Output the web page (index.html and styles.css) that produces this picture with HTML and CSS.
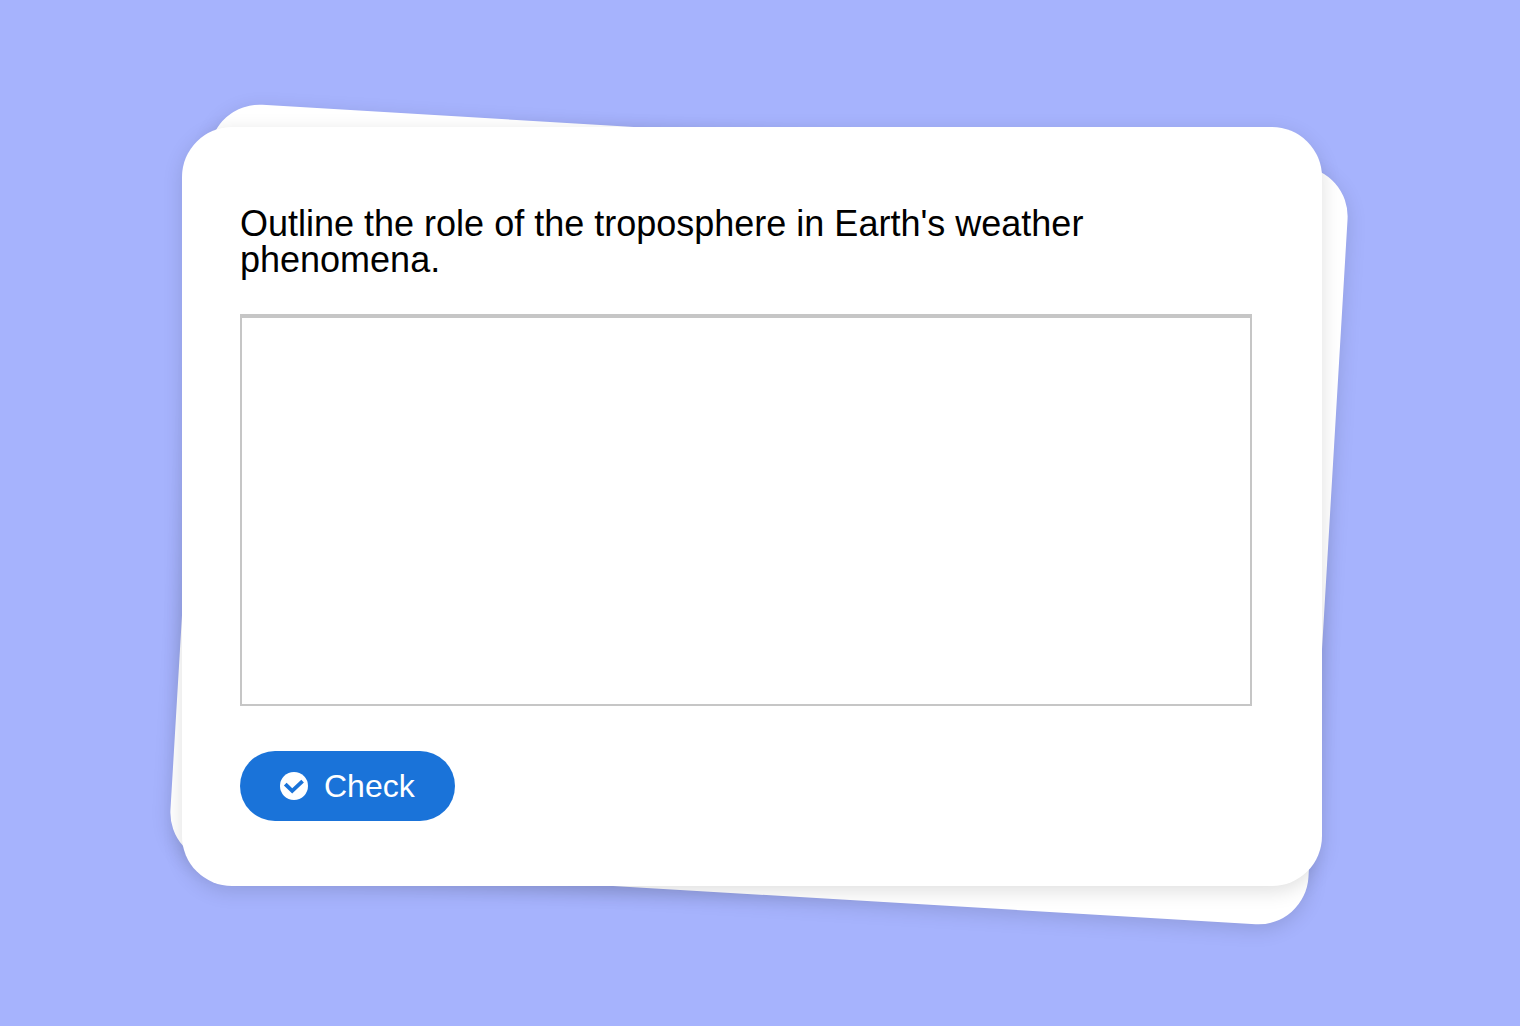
FILE: index.html
```html
<!DOCTYPE html>
<html lang="en">
<head>
  <meta charset="UTF-8">
  <meta name="viewport" content="width=device-width, initial-scale=1.0">
  <title>Essay question</title>
  <link rel="stylesheet" href="styles.css">
</head>
<body>
  <main class="card">
    <form class="question">
      <label class="question-text" for="answer">Outline the role of the troposphere in Earth's weather phenomena.</label>
      <textarea class="answer" id="answer" name="answer"></textarea>
      <button class="check" type="button">
        <svg class="check-icon" viewBox="0 0 28 28" aria-hidden="true">
          <circle cx="14" cy="14" r="14" fill="#fff"/>
          <path d="M6.6 13.4l5.6 5.4 9-8.4" fill="none" stroke="#1a73d9" stroke-width="3.8" stroke-linejoin="miter" stroke-linecap="square"/>
        </svg>
        Check
      </button>
    </form>
  </main>
</body>
</html>
```

FILE: styles.css
```css
* {
  box-sizing: border-box;
}
body {
  margin: 0;
  padding: 127px 198px 140px 182px;
  background-color: #a6b3fd;
  font-family: "Liberation Sans", Arial, sans-serif;
  color: #000;
  overflow-x: hidden;
}
.card {
  position: relative;
  z-index: 0;
}
/* tilted sheet behind, straight sheet on top */
.card::before,
.card::after {
  content: "";
  position: absolute;
  inset: 0;
  z-index: -1;
  border-radius: 50px;
  background-color: #fff;
  box-shadow: 0 5px 20px rgba(0, 0, 0, 0.13);
}
.card::before {
  transform: translate(7px, 8px) rotate(3.4deg);
}
.question {
  display: flex;
  flex-direction: column;
  align-items: flex-start;
  padding: 79px 70px 65px 58px;
}
.question-text {
  margin-bottom: 36px;
  font-size: 36px;
  line-height: 36px;
}
.answer {
  display: block;
  width: 100%;
  height: 392px;
  margin-bottom: 45px;
  padding: 16px;
  border: 2px solid #c6c6c6;
  border-top-width: 4px;
  border-radius: 0;
  background-color: #fff;
  font: inherit;
  font-size: 32px;
  resize: none;
  outline: none;
}
.check {
  display: flex;
  align-items: center;
  gap: 16px;
  height: 70px;
  padding: 0 40px;
  border: none;
  border-radius: 35px;
  background-color: #1a73d9;
  color: #fff;
  font-family: inherit;
  font-size: 32px;
  cursor: pointer;
}
.check:hover {
  background-color: #1558a8;
}
.check-icon {
  width: 28px;
  height: 28px;
}
```
